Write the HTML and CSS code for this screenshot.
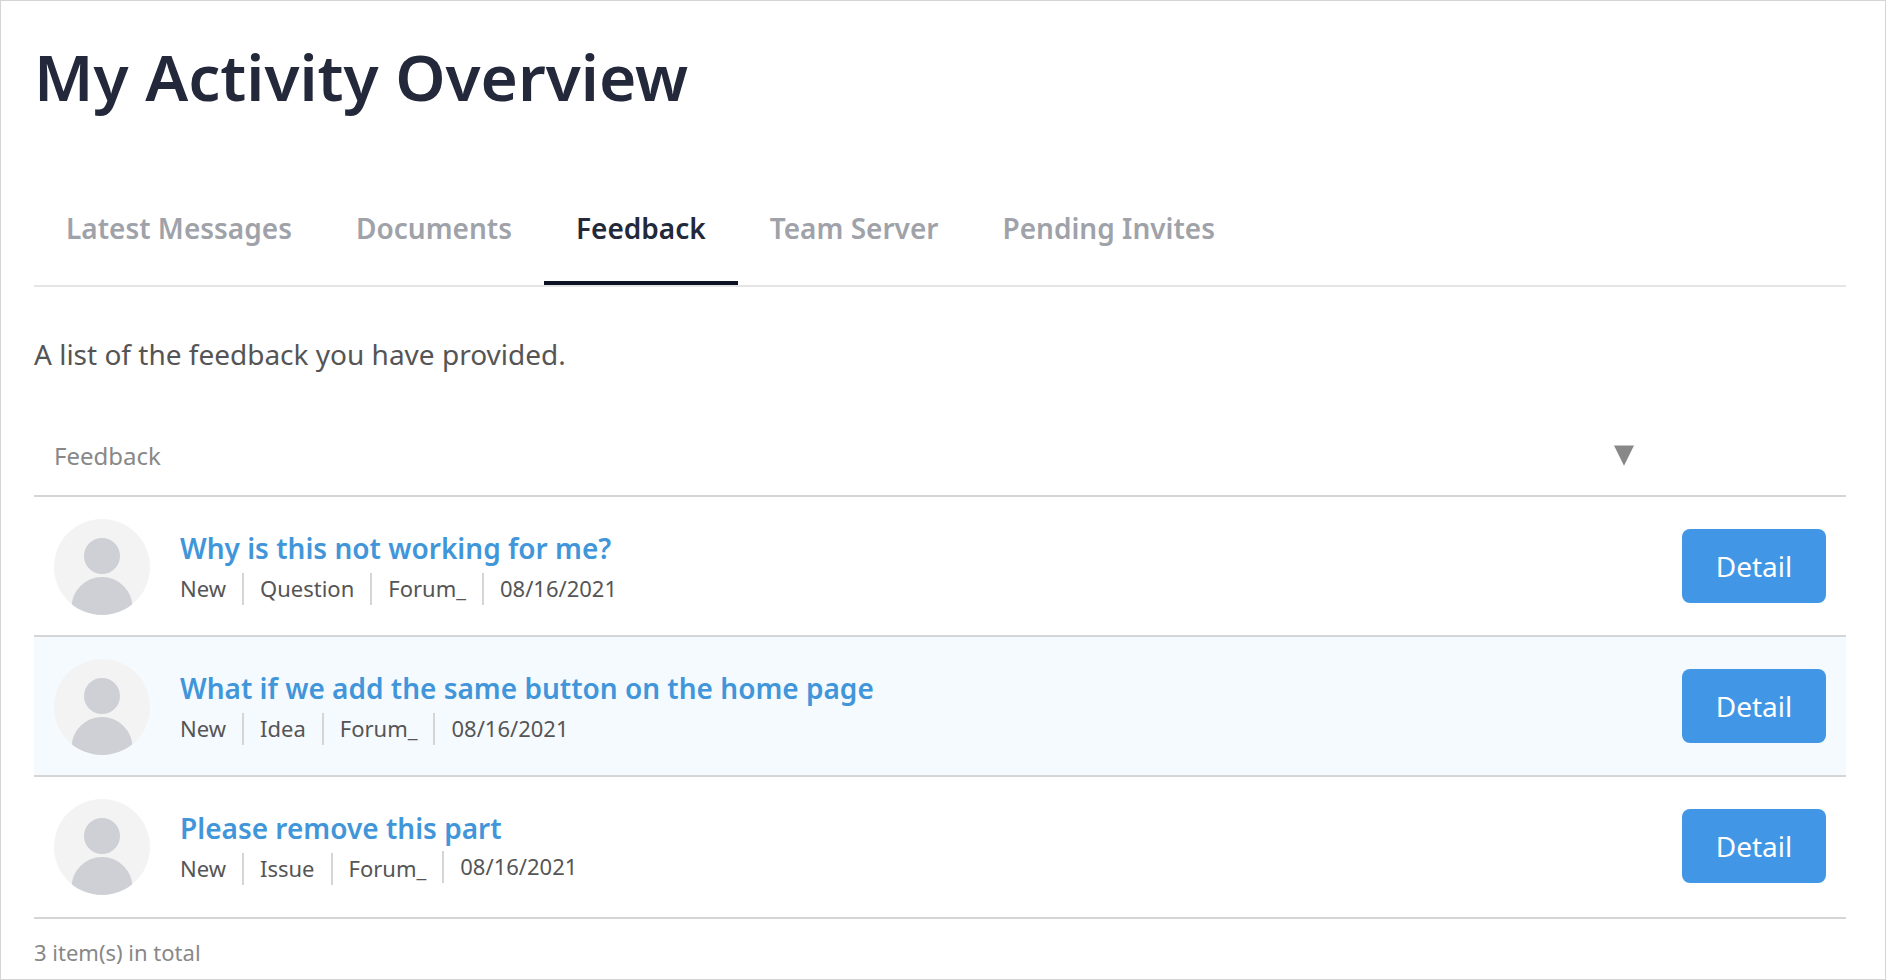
FILE: index.html
```html
<!DOCTYPE html>
<html lang="en">
<head>
<meta charset="utf-8">
<title>My Activity Overview</title>
<link rel="stylesheet" href="styles.css">
</head>
<body>
<svg class="defs" width="0" height="0" aria-hidden="true">
  <defs>
    <clipPath id="disc"><circle cx="48" cy="48" r="48"/></clipPath>
    <symbol id="person" viewBox="0 0 96 96">
      <circle cx="48" cy="48" r="48" fill="#f3f3f3"/>
      <g clip-path="url(#disc)" fill="#cfd0d5">
        <circle cx="48" cy="37" r="18"/>
        <path d="M17.500 98V88.500a30.500 30.500 0 0 1 61 0V98z"/>
      </g>
    </symbol>
  </defs>
</svg>
<main class="page">
  <h1 class="title">My Activity Overview</h1>
  <nav class="tabs">
    <a class="tab">Latest Messages</a>
    <a class="tab">Documents</a>
    <a class="tab active">Feedback</a>
    <a class="tab">Team Server</a>
    <a class="tab">Pending Invites</a>
  </nav>
  <p class="intro">A list of the feedback you have provided.</p>
  <div class="table-head">
    <span>Feedback</span>
    <svg class="sort" width="20" height="21" viewBox="0 0 20 21"><path d="M0 .5h20L10 20.800z" fill="#888"/></svg>
  </div>
  <section class="row">
    <svg class="avatar"><use href="#person"/></svg>
    <div class="info">
      <a class="subject">Why is this not working for me?</a>
      <div class="meta"><span>New</span><span>Question</span><span>Forum_</span><span>08/16/2021</span></div>
    </div>
    <button class="detail">Detail</button>
  </section>
  <section class="row tinted">
    <svg class="avatar"><use href="#person"/></svg>
    <div class="info">
      <a class="subject">What if we add the same button on the home page</a>
      <div class="meta"><span>New</span><span>Idea</span><span>Forum_</span><span>08/16/2021</span></div>
    </div>
    <button class="detail">Detail</button>
  </section>
  <section class="row last">
    <svg class="avatar"><use href="#person"/></svg>
    <div class="info">
      <a class="subject">Please remove this part</a>
      <div class="meta"><span>New</span><span>Issue</span><span>Forum_</span><span class="raised">08/16/2021</span></div>
    </div>
    <button class="detail">Detail</button>
  </section>
  <footer class="total">3 item(s) in total</footer>
</main>
</body>
</html>
```
FILE: styles.css
```css
* { box-sizing: border-box; }
body {
  margin: 0;
  background: #fff;
  font-family: "Noto Sans", "Open Sans", sans-serif;
}
.defs { position: absolute; }
.page {
  height: 980px;
  padding: 31px 39px 0 33px;
  border: 1px solid #d5d5d5;
  overflow: hidden;
}
.title {
  margin: 0;
  font-size: 64px;
  line-height: 89px;
  font-weight: 600;
  color: #23293a;
}
.tabs {
  display: flex;
  height: 79px;
  margin-top: 87px;
  border-bottom: 2px solid #e5e5e6;
}
.tab {
  padding: 0 32px;
  font-size: 28px;
  line-height: 40px;
  font-weight: 600;
  color: #a0a2a9;
  white-space: nowrap;
}
.tab.active {
  color: #23293a;
  border-bottom: 4px solid #0b1224;
}
.intro {
  margin: 47px 0 0;
  font-size: 28px;
  line-height: 40px;
  color: #555;
}
.table-head {
  display: flex;
  justify-content: space-between;
  align-items: flex-start;
  height: 63px;
  margin-top: 60px;
  padding: 6px 212px 0 20px;
  border-bottom: 2px solid #d5d5d5;
  font-size: 24px;
  line-height: 32px;
  color: #888;
}
.sort { margin-top: 5px; }
.row {
  display: flex;
  align-items: flex-start;
  height: 140px;
  padding: 22px 20px 0;
  border-bottom: 2px solid #d5d5d5;
}
.tinted { background: #f5faff; }
.row.last { height: 142px; }
.avatar { width: 96px; height: 96px; flex: none; }
.info { flex: 1; margin: 9px 0 0 30px; }
.subject {
  display: block;
  font-size: 28px;
  line-height: 40px;
  font-weight: 600;
  color: #4196da;
}
.meta {
  display: flex;
  margin-top: 5px;
  font-size: 22px;
  line-height: 30px;
  color: #555;
}
.meta span { padding-bottom: 2px; }
.meta span + span {
  margin-left: 16px;
  padding-left: 16px;
  border-left: 2px solid #d5d5d5;
}
.meta .raised { margin-top: -2px; margin-bottom: 2px; }
.detail {
  width: 144px;
  height: 74px;
  margin-top: 10px;
  padding: 0;
  border: 0;
  border-radius: 8px;
  background: #4197e5;
  color: #fff;
  font: 400 28px/74px "Noto Sans", sans-serif;
}
.total {
  margin-top: 17px;
  font-size: 22px;
  line-height: 32px;
  color: #888;
}
```
